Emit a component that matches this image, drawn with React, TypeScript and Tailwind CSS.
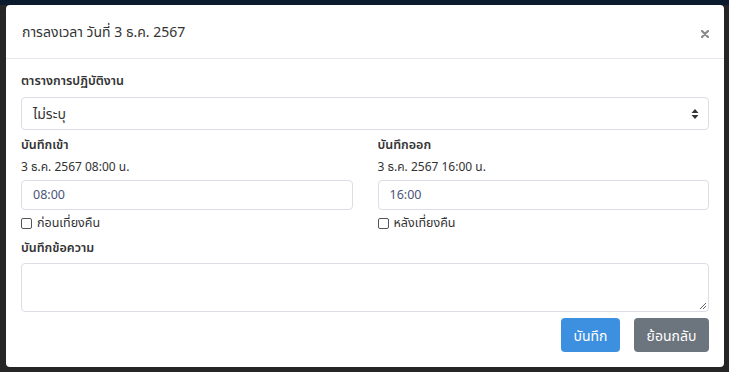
export default function App() {
  return (
    <div
      className="relative w-[729px] h-[372px] bg-[#262626] overflow-hidden"
      style={{ fontFamily: '"Noto Sans", "Noto Sans Thai", sans-serif' }}
    >
      <div className="h-[5px] bg-[#0c1a2e]" />
      <div className="ml-[6px] w-[718px] h-[362px] bg-white rounded-[4px] flex flex-col">
        {/* header */}
        <div className="h-[54px] border-b border-[#e6e7ef] flex items-center justify-between pl-[16px] pr-[15px]">
          <h5 className="text-[14px] text-[#333] leading-none">การลงเวลา วันที่ 3 ธ.ค. 2567</h5>
          <svg width="8" height="8" viewBox="0 0 8 8" className="mt-[5px] text-[#8a8a8a]">
            <path d="M1 1 L7 7 M7 1 L1 7" stroke="currentColor" strokeWidth="2.2" strokeLinecap="round" />
          </svg>
        </div>

        {/* body */}
        <div className="px-[15px] pt-[13px]">
          <label className="block text-[12.5px] font-semibold text-[#333] leading-[18px]">
            ตารางการปฏิบัติงาน
          </label>
          <div className="mt-[7px] h-[33px] border border-[#dcdde7] rounded-[4px] flex items-center justify-between pl-[11px] pr-[9px]">
            <span className="text-[14px] text-[#333]">ไม่ระบุ</span>
            <svg width="8" height="12" viewBox="0 0 8 12" className="text-[#333]">
              <path d="M4 1 L7.5 5 H0.5 Z" fill="currentColor" />
              <path d="M4 11 L7.5 7 H0.5 Z" fill="currentColor" />
            </svg>
          </div>

          <div className="grid grid-cols-2 gap-x-[25px] mt-[6px]">
            {[
              { label: "บันทึกเข้า", date: "3 ธ.ค. 2567 08:00 น.", time: "08:00", check: "ก่อนเที่ยงคืน" },
              { label: "บันทึกออก", date: "3 ธ.ค. 2567 16:00 น.", time: "16:00", check: "หลังเที่ยงคืน" },
            ].map((c) => (
              <div key={c.label}>
                <div className="text-[12.5px] font-semibold text-[#333] leading-[18px]">{c.label}</div>
                <div className="mt-[5px] text-[12px] text-[#333] leading-[16px]">{c.date}</div>
                <div className="mt-[5px] h-[30px] border border-[#dcdde7] rounded-[4px] flex items-center pl-[11px]">
                  <span className="text-[12.5px] text-[#4a5578]">{c.time}</span>
                </div>
                <label className="mt-[5px] flex items-center gap-[5px] h-[16px]">
                  <span className="w-[11px] h-[11px] border border-[#555] rounded-[2px] bg-white" />
                  <span className="text-[12.5px] text-[#333] leading-none">{c.check}</span>
                </label>
              </div>
            ))}
          </div>

          <div className="mt-[8px] text-[12.5px] font-semibold text-[#333] leading-[18px]">บันทึกข้อความ</div>
          <div className="relative mt-[6px] h-[49px] border border-[#dcdde7] rounded-[4px]">
            <svg width="8" height="8" viewBox="0 0 8 8" className="absolute right-[1px] bottom-[1px] text-[#666]">
              <path d="M7 1 L1 7 M7 4 L4 7" stroke="currentColor" strokeWidth="1" />
            </svg>
          </div>

          <div className="mt-[6px] flex justify-end gap-[14px]">
            <button className="h-[34px] w-[59px] rounded-[4px] bg-[#3d8fe0] text-white text-[14px]">
              บันทึก
            </button>
            <button className="h-[34px] w-[75px] rounded-[4px] bg-[#6c757d] text-white text-[14px]">
              ย้อนกลับ
            </button>
          </div>
        </div>
      </div>
    </div>
  );
}
